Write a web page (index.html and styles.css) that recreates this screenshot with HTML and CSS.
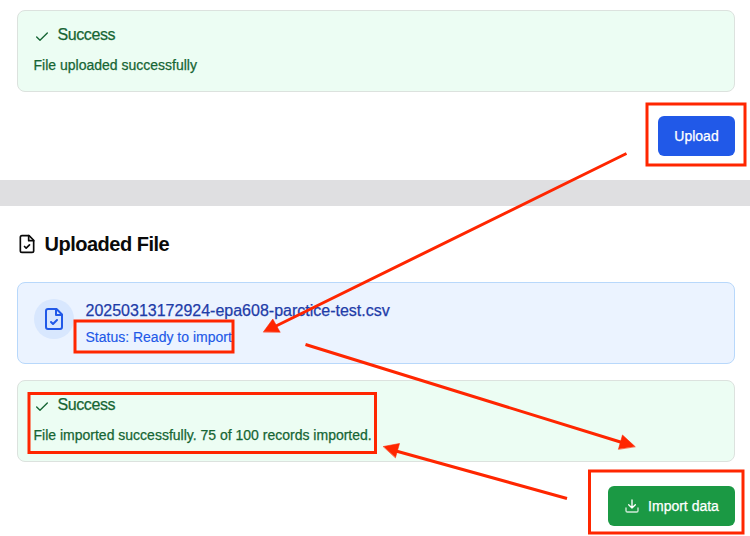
FILE: index.html
```
<!DOCTYPE html>
<html lang="en">
<head>
<meta charset="utf-8">
<title>Import data</title>
<link rel="stylesheet" href="styles.css">
</head>
<body>
<main class="page">
  <section class="panel upload-panel">
    <div class="alert">
      <div class="alert-title">
        <svg class="check" viewBox="0 0 24 24"><path d="M20 6 9 17l-5-5"/></svg>
        <span class="alert-name">Success</span>
      </div>
      <p class="alert-text"><span class="msg-upload">File uploaded successfully</span></p>
    </div>
    <div class="actions"><button class="btn blue"><span class="label-upload">Upload</span></button></div>
  </section>
  <section class="panel file-panel">
    <h2 class="heading">
      <svg class="heading-icon" viewBox="0 0 24 24"><path d="M14.500 2H6a2 2 0 0 0-2 2v16a2 2 0 0 0 2 2h12a2 2 0 0 0 2-2V7.500L14.500 2z"/><path d="M14 2v6h6"/><path d="m9 15 2 2 4-4"/></svg>
      <span class="heading-text">Uploaded File</span>
    </h2>
    <div class="file">
      <div class="avatar"><svg class="file-icon" viewBox="0 0 24 24"><path d="M14.500 2H6a2 2 0 0 0-2 2v16a2 2 0 0 0 2 2h12a2 2 0 0 0 2-2V7.500L14.500 2z"/><path d="M14 2v6h6"/><path d="m9 15 2 2 4-4"/></svg></div>
      <div class="file-info">
        <div class="file-name">20250313172924-epa608-parctice-test.csv</div>
        <div class="file-status">Status: Ready to import</div>
      </div>
    </div>
    <div class="alert">
      <div class="alert-title">
        <svg class="check" viewBox="0 0 24 24"><path d="M20 6 9 17l-5-5"/></svg>
        <span class="alert-name">Success</span>
      </div>
      <p class="alert-text"><span class="msg-import">File imported successfully. 75 of 100 records imported.</span></p>
    </div>
    <div class="actions">
      <button class="btn green">
        <svg class="download" viewBox="0 0 24 24"><path d="M21 15v4a2 2 0 0 1-2 2H5a2 2 0 0 1-2-2v-4" opacity=".8"/><path d="m7 10 5 5 5-5M12 15V3"/></svg>
        <span class="label-import">Import data</span>
      </button>
    </div>
  </section>
  <svg class="notes" viewBox="0 0 750 536">
    <g class="outline">
      <rect x="647" y="104" width="98" height="61"/>
      <rect x="75" y="321" width="158" height="31"/>
      <rect x="29" y="393.500" width="346.500" height="59"/>
      <rect x="589.500" y="471" width="153.500" height="62"/>
      <path d="M626.500 153.500 275 326.500M305.500 344.500 622 442.500M567 498.500 396 451"/>
    </g>
    <path class="tip" d="M263.500 331.800 272.800 319 280 332ZM635 446.500 622.500 435 618.500 449ZM383.500 446.500 399.500 443.500 395.500 457.500Z"/>
  </svg>
</main>
</body>
</html>
```
FILE: styles.css
```
* { box-sizing: border-box; }
body {
  margin: 0;
  background: #fff;
  font-family: "Liberation Sans", Arial, sans-serif;
  overflow: hidden;
}
svg {
  flex: none;
  fill: none;
  stroke: currentColor;
  stroke-width: 2;
  stroke-linecap: round;
  stroke-linejoin: round;
}
.page { position: relative; height: 536px; overflow: hidden; }
.panel { padding: 0 15px 0 17px; }
.upload-panel {
  height: 206px;
  padding-top: 10px;
  border-bottom: 26px solid #dfdfe1;
}
.file-panel { padding-top: 24px; }
.alert {
  height: 82px;
  padding: 12px 16px 12px 15.5px;
  border: 1px solid #dce2de;
  border-radius: 8px;
  background: #ecfdf3;
  color: #166534;
}
.alert-title {
  display: flex;
  align-items: center;
  gap: 8px;
  height: 24px;
  font-size: 16px;
}
.check { width: 16px; height: 16px; position: relative; top: 2px; left: 0.5px; }
.alert-name { letter-spacing: -0.4px; -webkit-text-stroke: 0.25px; }
.alert-text {
  margin: 8px 0 0;
  font-size: 14px;
  line-height: 20px;
  -webkit-text-stroke: 0.25px;
}
.actions { display: flex; justify-content: flex-end; margin-top: 24px; }
.btn {
  display: flex;
  align-items: center;
  justify-content: center;
  gap: 8px;
  height: 40px;
  padding: 0 16px;
  border: 0;
  border-radius: 6px;
  color: #fff;
  font: 14px/20px "Liberation Sans", Arial, sans-serif;
  -webkit-text-stroke: 0.25px;
}
.blue { width: 77px; background: #2159e8; }
.green { width: 127px; background: #1b9944; }
.download { width: 16px; height: 16px; }
.heading {
  display: flex;
  align-items: center;
  gap: 7.5px;
  height: 28px;
  margin: 0 0 24px;
  color: #0a0a0a;
  font-size: 20px;
  line-height: 28px;
}
.heading-icon { width: 20px; height: 20px; }
.heading-text { letter-spacing: -0.5px; }
.file {
  display: flex;
  align-items: flex-start;
  gap: 11.5px;
  height: 82px;
  margin-bottom: 16px;
  padding: 16px;
  border: 1px solid #b8d8fb;
  border-radius: 8px;
  background: #ebf3ff;
}
.avatar {
  display: grid;
  place-items: center;
  width: 40px;
  height: 40px;
  border-radius: 50%;
  background: #d8e7fe;
  color: #2159e8;
}
.file-icon { width: 24px; height: 24px; }
.file-name {
  color: #1e3ca8;
  font-size: 16px;
  line-height: 24px;
  -webkit-text-stroke: 0.25px;
}
.file-status {
  margin-top: 4px;
  color: #2159e8;
  font-size: 14px;
  line-height: 20px;
  -webkit-text-stroke: 0.15px;
}
.notes { position: absolute; inset: 0; width: 750px; height: 536px; pointer-events: none; }
.outline { stroke: #ff2600; stroke-width: 3; stroke-linecap: butt; stroke-linejoin: miter; }
.tip { fill: #ff2600; stroke: #ff2600; stroke-width: 0.6; stroke-linejoin: miter; }
```
